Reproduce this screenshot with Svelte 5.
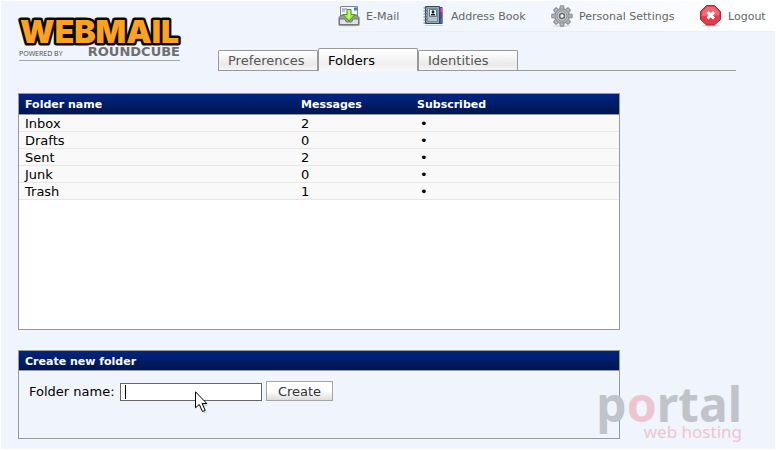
<script>
  const tabs = [
    { label: 'Preferences', active: false },
    { label: 'Folders', active: true },
    { label: 'Identities', active: false }
  ];
  const folders = [
    { name: 'Inbox', messages: 2 },
    { name: 'Drafts', messages: 0 },
    { name: 'Sent', messages: 2 },
    { name: 'Junk', messages: 0 },
    { name: 'Trash', messages: 1 }
  ];
  const teeth = [0, 45, 90, 135, 180, 225, 270, 315];
  const rings = [3, 6, 9, 12, 15, 18];
  let folderName = $state('');
</script>

<div class="page">
  <header>
    <a class="logo" href="#home" aria-label="Webmail powered by RoundCube">
      <svg width="172" height="46" viewBox="0 0 172 46">
        <text class="word" x="2" y="26">WEBMAIL</text>
        <text class="powered" x="1" y="39">POWERED BY</text>
        <text class="cube" x="162" y="39" text-anchor="end">ROUNDCUBE</text>
        <path d="M1 43.500H162" stroke="#a5a8ad" />
      </svg>
    </a>

    <nav class="taskbar" aria-label="Tasks">
      <a href="#mail">
        <svg width="22" height="22" viewBox="0 0 22 22">
          <ellipse cx="11" cy="20.5" rx="11" ry="1" fill="#d5d8dc" />
          <path d="M2.500 1.500h17v13h-17z" fill="#f5f6f8" stroke="#82868a" />
          <path d="M4 4h5M4 6h3" stroke="#7789aa" />
          <path d="M16 2.500h3v3h-3z" fill="#3978e8" />
          <path d="M1 12.500L3.500 10h15l2.500 2.500v7.500H1z" fill="#9a9c9d" stroke="#696b6d" />
          <path d="M1.500 14h5l2 3h5l2-3h5v5.500h-19z" fill="#e0e1e2" stroke="#747678" />
          <path d="M9 4.500h4v5h4L11 16 5 9.500h4z" fill="#a5ee3f" stroke="#439714" />
          <path d="M11 5v8" stroke="#e4ffba" />
        </svg>
        <span>E-Mail</span>
      </a>
      <a href="#addressbook">
        <svg width="22" height="22" viewBox="0 0 22 22">
          <path d="M2 20.500h18" stroke="#ced1d6" />
          <path d="M16 2h3.500v17H16z" fill="#4d466a" />
          <path d="M17.500 3h2v4h-2z" fill="#db4fb3" />
          <path d="M17.500 8h2v4h-2z" fill="#7945a6" />
          <path d="M17.500 13h2v5h-2z" fill="#347ca5" />
          <path d="M2.500 1.500h14v17h-14z" fill="#93a7b8" stroke="#334960" />
          <path d="M4.500 3.500h10v13h-10z" fill="#b2c1cc" stroke="#758b9e" />
          <path d="M6.500 4.500h7v7h-7z" fill="#fff" stroke="#667586" />
          <circle cx="10" cy="6.800" r="1.500" fill="#111c2c" />
          <path d="M7.500 10.500q0-2 2.500-2t2.500 2z" fill="#111c2c" />
          {#each rings as y}
            <path d="M0.500 {y}h3v-1" fill="none" stroke="#686f78" />
          {/each}
        </svg>
        <span>Address Book</span>
      </a>
      <a href="#settings">
        <svg width="22" height="22" viewBox="0 0 22 22">
          <ellipse cx="11" cy="21" rx="9" ry="1" fill="#dce0e5" />
          {#each teeth as angle}
            <path d="M8.700 5L9.300.8h3.400l.6 4.200z" fill="#b4b7ba" stroke="#85898d" transform="rotate({angle} 11 11)" />
          {/each}
          <circle cx="11" cy="11" r="7" fill="#b9bcbf" stroke="#8d9194" />
          <circle cx="11" cy="11" r="5" fill="#d0d2d4" stroke="#8a8e91" />
          <circle cx="11" cy="11" r="2.500" fill="#f2f6fc" stroke="#65696d" stroke-width="1.500" />
        </svg>
        <span>Personal Settings</span>
      </a>
      <a href="#logout">
        <svg width="22" height="22" viewBox="0 0 22 22">
          <ellipse cx="11" cy="20.500" rx="9" ry="1" fill="#d5d5d9" />
          <path d="M6.500.5h8l6 6v8l-6 5.500h-8l-6-5.500v-8z" fill="#df3c4c" stroke="#bd2232" />
          <path d="M7 1.800h7l5.200 5.200v3q-8 2-17.400 1V7z" fill="#ee6971" />
          <path d="M7.500 7l6.500 6.500M14 7l-6.500 6.500" stroke="#fff" stroke-width="3" />
        </svg>
        <span>Logout</span>
      </a>
    </nav>

    <nav class="tabs" aria-label="Settings sections">
      {#each tabs as tab}
        <a href="#{tab.label}" class:active={tab.active}>{tab.label}</a>
      {/each}
    </nav>
  </header>

  <main>
    <section class="box list">
      <table>
        <thead>
          <tr><th class="name">Folder name</th><th class="count">Messages</th><th>Subscribed</th></tr>
        </thead>
        <tbody>
          {#each folders as folder}
            <tr><td>{folder.name}</td><td>{folder.messages}</td><td class="dot">•</td></tr>
          {/each}
        </tbody>
      </table>
    </section>

    <section class="box create">
      <h2>Create new folder</h2>
      <form onsubmit={(e) => e.preventDefault()}>
        <label for="folder">Folder name:</label>
        <span class="field">
          <input id="folder" type="text" bind:value={folderName} />
          <i class="caret"></i>
          <svg class="pointer" width="14" height="23" viewBox="0 0 14 23">
            <path d="M2 3l11 11-4 2 3 6H9L5 18z" fill="#888" opacity=".3" />
            <path d="M.5.800v16L4.300 13.500l3.200 7 2.700-1.100-3.100-6.900h4.700z" fill="#fff" stroke="#000" />
          </svg>
        </span>
        <button type="submit">Create</button>
      </form>
    </section>
  </main>

  <svg class="watermark" width="152" height="70" viewBox="0 0 152 70">
    <text class="portal" x="148" y="43" text-anchor="end">p<tspan fill="#edc5cf">o</tspan>rtal</text>
    <text class="hosting" x="148" y="59" text-anchor="end">web hosting</text>
  </svg>
</div>

<style>
  :global(body) {
    margin: 0;
    background: #fff;
  }
  .page {
    position: relative;
    box-sizing: border-box;
    min-height: 100vh;
    border: 1px solid #fff;
    background: #f0f5fd;
    font-family: "DejaVu Sans", Verdana, sans-serif;
    font-size: 13px;
    color: #000;
  }
  header {
    display: grid;
    grid-template-columns: 217px 1fr;
    grid-template-rows: 31px 39px;
  }
  .logo {
    grid-row: 1 / 3;
    padding: 16px 0 0 17px;
  }
  .logo svg {
    display: block;
    overflow: visible;
  }
  .word {
    font-family: Inter, sans-serif;
    font-weight: 900;
    font-size: 32px;
    fill: #fca120;
    stroke: #080808;
    stroke-width: 5px;
    stroke-linejoin: round;
    paint-order: stroke;
  }
  .powered {
    font-family: "Open Sans", sans-serif;
    font-size: 7px;
    fill: #444;
  }
  .cube {
    font-weight: bold;
    font-size: 13px;
    fill: #6c6e72;
  }
  .taskbar {
    justify-self: end;
    display: grid;
    grid-template-columns: 85px 128px 149px 75px;
    height: 30px;
    border-bottom: 1px solid #e9eef6;
    background: linear-gradient(90deg, #f0f5fd, #f3f7fd 50%, #fff);
  }
  .taskbar a {
    display: flex;
    align-items: center;
    gap: 6px;
    font-size: 11px;
    color: #666;
    text-decoration: none;
    white-space: nowrap;
  }
  .tabs {
    display: flex;
    align-items: flex-end;
    margin-right: 39px;
    border-bottom: 1px solid #999;
  }
  .tabs a {
    box-sizing: border-box;
    width: 100px;
    height: 20px;
    padding-left: 9px;
    border: 1px solid #999;
    border-bottom: 0;
    border-radius: 2px 2px 0 0;
    background: linear-gradient(#fff, #eaeaea 70%, #f5f5f5);
    line-height: 20px;
    color: #555;
    text-decoration: none;
  }
  .tabs .active {
    height: 23px;
    margin-bottom: -1px;
    line-height: 23px;
    background: linear-gradient(#fff, #efefef 70%, #fafafa);
    color: #000;
  }
  main {
    display: flex;
    flex-direction: column;
    gap: 20px;
    padding: 22px 155px 10px 17px;
  }
  .box {
    box-sizing: border-box;
    border: 1px solid #999;
  }
  .list {
    min-height: 237px;
    background: #fff;
  }
  table {
    width: 100%;
    border-collapse: separate;
    border-spacing: 0;
    table-layout: fixed;
  }
  th,
  h2 {
    box-sizing: border-box;
    height: 21px;
    margin: 0;
    padding: 2px 6px 0;
    border-bottom: 1px solid #999;
    background: linear-gradient(#002480, #001650);
    line-height: 18px;
    font-size: 11px;
    font-weight: bold;
    text-align: left;
    color: #fff;
  }
  .name {
    width: 276px;
  }
  .count {
    width: 116px;
  }
  td {
    height: 14px;
    padding: 2px 6px 0;
    border-bottom: 1px solid #e7e7e7;
    background: #f9f9f9;
    line-height: 14px;
  }
  .dot {
    padding-left: 9px;
  }
  .create {
    min-height: 89px;
  }
  h2 {
    height: 20px;
  }
  form {
    display: flex;
    align-items: flex-end;
    gap: 4px;
    padding: 10px;
  }
  label {
    width: 87px;
    line-height: 18px;
    white-space: nowrap;
  }
  .field {
    position: relative;
    width: 142px;
    height: 18px;
  }
  input {
    display: block;
    box-sizing: border-box;
    width: 100%;
    height: 100%;
    padding: 0 4px;
    border: 1px solid #666;
    background: #fff;
    font: inherit;
    outline: none;
  }
  .caret {
    position: absolute;
    left: 5px;
    top: 2px;
    width: 1px;
    height: 14px;
    background: #000;
  }
  .pointer {
    position: absolute;
    left: 75px;
    top: 8px;
  }
  button {
    width: 67px;
    height: 20px;
    padding: 1px 0 0;
    border: 1px solid #a4a4a4;
    background: linear-gradient(#fff 50%, #ddd);
    font: inherit;
    color: #333;
  }
  .watermark {
    position: absolute;
    right: 29px;
    bottom: 0;
    overflow: visible;
  }
  .portal {
    font-family: "Noto Sans", sans-serif;
    font-size: 48px;
    font-weight: bold;
    fill: #c0c4ca;
  }
  .hosting {
    font-family: "Noto Sans", sans-serif;
    font-size: 17px;
    fill: #edc5cf;
  }
</style>
